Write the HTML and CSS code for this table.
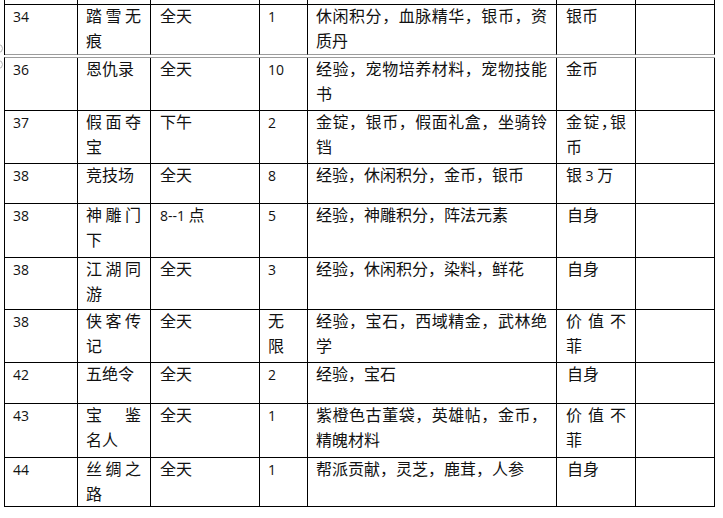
FILE: index.html
```html
<!DOCTYPE html>
<html lang="zh-CN">
<head>
<meta charset="utf-8">
<title>活动表</title>
<link rel="stylesheet" href="styles.css">
</head>
<body>
<div class="page">
  <span class="mark mark-1"></span>
  <span class="mark mark-2"></span>
  <div class="tbl tbl-a">
    <div class="c cut"></div><div class="c cut"></div><div class="c cut"></div><div class="c cut"></div><div class="c cut"></div><div class="c cut"></div><div class="c cut"></div>

    <div class="c brk"><div class="t"><span class="n">34</span></div></div>
    <div class="c brk"><div class="t">踏雪无痕</div></div>
    <div class="c brk pl9"><div class="t">全天</div></div>
    <div class="c brk"><div class="t"><span class="n">1</span></div></div>
    <div class="c brk"><div class="t">休闲积分，血脉精华，银币，资质丹</div></div>
    <div class="c brk pl9"><div class="t">银币</div></div>
    <div class="c brk"></div>
  </div>

  <div class="tbl tbl-b">
    <div class="c"><div class="t"><span class="n">36</span></div></div>
    <div class="c"><div class="t">恩仇录</div></div>
    <div class="c pl9"><div class="t">全天</div></div>
    <div class="c"><div class="t"><span class="n">10</span></div></div>
    <div class="c"><div class="t">经验，宠物培养材料，宠物技能书</div></div>
    <div class="c pl9"><div class="t">金币</div></div>
    <div class="c"></div>

    <div class="c"><div class="t"><span class="n">37</span></div></div>
    <div class="c"><div class="t">假面夺宝</div></div>
    <div class="c pl9"><div class="t">下午</div></div>
    <div class="c"><div class="t"><span class="n">2</span></div></div>
    <div class="c"><div class="t">金锭，银币，假面礼盒，坐骑铃铛</div></div>
    <div class="c pl9"><div class="t halt">金锭，银币</div></div>
    <div class="c"></div>

    <div class="c"><div class="t"><span class="n">38</span></div></div>
    <div class="c"><div class="t">竞技场</div></div>
    <div class="c pl9"><div class="t">全天</div></div>
    <div class="c"><div class="t"><span class="n">8</span></div></div>
    <div class="c"><div class="t">经验，休闲积分，金币，银币</div></div>
    <div class="c pl9"><div class="t">银 <span class="n">3</span> 万</div></div>
    <div class="c"></div>

    <div class="c"><div class="t"><span class="n">38</span></div></div>
    <div class="c"><div class="t">神雕门下</div></div>
    <div class="c pl9"><div class="t"><span class="n">8--1</span> 点</div></div>
    <div class="c"><div class="t"><span class="n">5</span></div></div>
    <div class="c"><div class="t">经验，神雕积分，阵法元素</div></div>
    <div class="c pl10"><div class="t">自身</div></div>
    <div class="c"></div>

    <div class="c"><div class="t"><span class="n">38</span></div></div>
    <div class="c"><div class="t">江湖同游</div></div>
    <div class="c pl9"><div class="t">全天</div></div>
    <div class="c"><div class="t"><span class="n">3</span></div></div>
    <div class="c"><div class="t">经验，休闲积分，染料，鲜花</div></div>
    <div class="c pl10"><div class="t">自身</div></div>
    <div class="c"></div>

    <div class="c"><div class="t"><span class="n">38</span></div></div>
    <div class="c"><div class="t">侠客传记</div></div>
    <div class="c pl9"><div class="t">全天</div></div>
    <div class="c"><div class="t">无限</div></div>
    <div class="c"><div class="t">经验，宝石，西域精金，武林绝学</div></div>
    <div class="c pl9"><div class="t">价值不菲</div></div>
    <div class="c"></div>

    <div class="c"><div class="t"><span class="n">42</span></div></div>
    <div class="c"><div class="t">五绝令</div></div>
    <div class="c pl9"><div class="t">全天</div></div>
    <div class="c"><div class="t"><span class="n">2</span></div></div>
    <div class="c"><div class="t">经验，宝石</div></div>
    <div class="c pl10"><div class="t">自身</div></div>
    <div class="c"></div>

    <div class="c"><div class="t"><span class="n">43</span></div></div>
    <div class="c keep"><div class="t">宝鉴<wbr>名人</div></div>
    <div class="c pl9"><div class="t">全天</div></div>
    <div class="c"><div class="t"><span class="n">1</span></div></div>
    <div class="c"><div class="t">紫橙色古董袋，英雄帖，金币，精魄材料</div></div>
    <div class="c pl9"><div class="t">价值不菲</div></div>
    <div class="c"></div>

    <div class="c"><div class="t"><span class="n">44</span></div></div>
    <div class="c"><div class="t">丝绸之路</div></div>
    <div class="c pl9"><div class="t">全天</div></div>
    <div class="c"><div class="t"><span class="n">1</span></div></div>
    <div class="c"><div class="t">帮派贡献，灵芝，鹿茸，人参</div></div>
    <div class="c pl10"><div class="t">自身</div></div>
    <div class="c"></div>
  </div>
</div>
</body>
</html>
```

FILE: styles.css
```css
html, body {
  margin: 0;
  padding: 0;
  background: #ffffff;
}

body {
  font-family: "Noto Sans CJK SC", sans-serif;
  font-size: 16px;
  color: #111111;
}

.page {
  position: relative;
  padding-left: 4px;
  width: 719px;
}

.tbl {
  display: grid;
  grid-template-columns: 73px 73px 109px 48px 249px 79px 79px;
  width: max-content;
  border-left: 1px solid #000000;
}

.tbl-a {
  grid-template-rows: 5px 50px;
}

.tbl-b {
  margin-top: 2px;
  border-top: 1px solid #9c9c9c;
  grid-template-rows: 53px 53px 40px 54px 52px 53px 41px 54px 49px;
}

.c {
  box-sizing: border-box;
  border-right: 1px solid #000000;
  border-bottom: 1px solid #000000;
  padding: 0 9px 0 8px;
  line-height: 25px;
  text-align: justify;
}

.c.cut {
  padding: 0;
}

.c.brk {
  border-bottom-color: #9c9c9c;
}

.c.pl9 {
  padding-left: 9px;
}

.c.pl10 {
  padding-left: 10px;
}

.c.keep {
  word-break: keep-all;
}

.t {
  margin-top: -2px;
}

.t.halt {
  font-feature-settings: "halt";
}

.n {
  font-family: "Open Sans", "Liberation Sans", sans-serif;
  font-size: 14px;
  line-height: 16px;
}

.mark {
  position: absolute;
  left: -6px;
  width: 7px;
  height: 7px;
  border: 1px solid #b4b4b4;
  border-radius: 50%;
}

.mark-1 {
  top: 44px;
}

.mark-2 {
  top: 60px;
}
```
